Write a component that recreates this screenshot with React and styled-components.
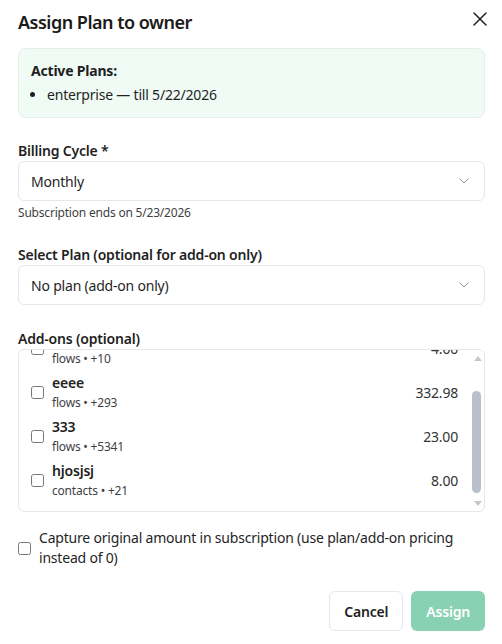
import React, { useLayoutEffect, useRef, useState } from 'react';
import styled, { createGlobalStyle } from 'styled-components';
import { X, ChevronDown } from 'lucide-react';

const GlobalStyle = createGlobalStyle`
  html, body {
    margin: 0;
    padding: 0;
    background: #ffffff;
  }
  body {
    font-family: 'Noto Sans', 'Open Sans', sans-serif;
    color: #1f1f1f;
    letter-spacing: -0.2px;
    -webkit-font-smoothing: antialiased;
  }
  * {
    box-sizing: border-box;
  }
`;

const Dialog = styled.div`
  width: 502px;
  padding: 8px 17px 13px 18px;
  display: flex;
  flex-direction: column;
`;

const Header = styled.div`
  display: flex;
  justify-content: space-between;
  align-items: center;
  height: 28px;
`;

const Title = styled.h2`
  margin: 0;
  font-size: 18px;
  font-weight: 600;
  line-height: 28px;
  letter-spacing: -0.5px;
  color: #1a1a1a;
`;

const CloseButton = styled.button`
  display: flex;
  align-items: center;
  justify-content: center;
  width: 24px;
  height: 24px;
  margin-right: -7px;
  margin-top: -6px;
  padding: 0;
  border: none;
  background: transparent;
  color: #222;
  cursor: pointer;
`;

const ActiveBox = styled.div`
  margin-top: 12px;
  padding: 12px;
  border: 1px solid #e3efe8;
  border-radius: 8px;
  background: #effbf4;
`;

const ActiveTitle = styled.div`
  font-size: 14px;
  font-weight: 700;
  line-height: 20px;
`;

const PlanList = styled.ul`
  margin: 4px 0 0 0;
  padding-left: 16px;
  font-size: 14px;
  line-height: 20px;
`;

const Section = styled.div`
  margin-top: ${(p) => p.$gap || 24}px;
  display: flex;
  flex-direction: column;
`;

const Label = styled.label`
  font-size: 14px;
  font-weight: 600;
  line-height: 20px;
`;

const SelectBox = styled.div`
  height: 40px;
  display: flex;
  align-items: center;
  justify-content: space-between;
  padding: 0 12px;
  border: 1px solid #e5e7eb;
  border-radius: 6px;
  font-size: 14px;
  color: #1f1f1f;
  background: #fff;

  svg {
    color: #6b7280;
    opacity: 0.75;
  }
`;

const Hint = styled.div`
  margin-top: 4px;
  font-size: 12px;
  line-height: 16px;
  color: #3f3f46;
`;

const ListFrame = styled.div`
  height: 163px;
  display: flex;
  border: 1px solid #e5e7eb;
  border-radius: 6px;
  overflow: hidden;
`;

const Viewport = styled.div`
  flex: 1;
  overflow: hidden;
`;

const ListContent = styled.div`
  padding: 8px 0 9px 0;
`;

const ScrollTrack = styled.div`
  width: 14px;
  display: flex;
  flex-direction: column;
  align-items: center;
`;

const ArrowButton = styled.div`
  height: 16px;
  width: 100%;
  display: flex;
  align-items: center;
  justify-content: center;
  padding-left: 1px;
`;

const ThumbArea = styled.div`
  flex: 1;
  width: 100%;
  display: flex;
  flex-direction: column;
  justify-content: flex-end;
  padding: 0 3px 2px 2px;
`;

const Thumb = styled.div`
  height: 102px;
  border-radius: 5px;
  background: #b9c0ca;
`;

const AddonRow = styled.label`
  display: flex;
  align-items: center;
  height: 44px;
  padding: 0 12px;
  gap: 8px;
  cursor: pointer;
`;

const Check = styled.input.attrs({ type: 'checkbox' })`
  width: 13px;
  height: 13px;
  margin: 0;
  flex-shrink: 0;
`;

const AddonInfo = styled.div`
  flex: 1;
  display: flex;
  flex-direction: column;
`;

const AddonName = styled.span`
  font-size: 14px;
  font-weight: 600;
  line-height: 20px;
`;

const AddonMeta = styled.span`
  margin-top: 2px;
  font-size: 12px;
  line-height: 16px;
  color: #3f3f46;
`;

const Price = styled.span`
  font-size: 14px;
  color: #333;
`;

const CaptureRow = styled.label`
  margin-top: 16px;
  display: flex;
  align-items: center;
  gap: 8px;
  font-size: 14px;
  line-height: 20px;
  cursor: pointer;
`;

const Footer = styled.div`
  margin-top: 23px;
  display: flex;
  justify-content: flex-end;
  gap: 8px;
`;

const Button = styled.button`
  height: 40px;
  padding: 0 14px;
  border-radius: 6px;
  font-family: inherit;
  font-size: 14px;
  font-weight: 600;
  letter-spacing: -0.2px;
  cursor: pointer;
  border: 1px solid ${(p) => (p.$primary ? 'transparent' : '#e5e7eb')};
  background: ${(p) => (p.$primary ? '#88d1b3' : '#ffffff')};
  color: ${(p) => (p.$primary ? '#ffffff' : '#1f1f1f')};
`;

const Arrow = ({ down }) => (
  <svg width="8" height="5" viewBox="0 0 8 5">
    <path d={down ? 'M0 0 L8 0 L4 5 Z' : 'M0 5 L4 0 L8 5 Z'} fill="#c4c8ce" />
  </svg>
);

const addons = [
  { name: 'test', meta: 'flows • +10', price: '4.00' },
  { name: 'eeee', meta: 'flows • +293', price: '332.98' },
  { name: '333', meta: 'flows • +5341', price: '23.00' },
  { name: 'hjosjsj', meta: 'contacts • +21', price: '8.00' },
];

export default function App() {
  const listRef = useRef(null);
  const [capture, setCapture] = useState(false);

  useLayoutEffect(() => {
    if (listRef.current) listRef.current.scrollTop = 9999;
  }, []);

  return (
    <>
      <GlobalStyle />
      <Dialog>
        <Header>
          <Title>Assign Plan to owner</Title>
          <CloseButton aria-label="Close">
            <X size={24} strokeWidth={1.5} />
          </CloseButton>
        </Header>

        <ActiveBox>
          <ActiveTitle>Active Plans:</ActiveTitle>
          <PlanList>
            <li>enterprise — till 5/22/2026</li>
          </PlanList>
        </ActiveBox>

        <Section $gap={23}>
          <Label>Billing Cycle *</Label>
          <SelectBox>
            Monthly
            <ChevronDown size={16} strokeWidth={1.5} />
          </SelectBox>
          <Hint>Subscription ends on 5/23/2026</Hint>
        </Section>

        <Section>
          <Label>Select Plan (optional for add-on only)</Label>
          <SelectBox>
            No plan (add-on only)
            <ChevronDown size={16} strokeWidth={1.5} />
          </SelectBox>
        </Section>

        <Section>
          <Label>Add-ons (optional)</Label>
          <ListFrame>
            <Viewport ref={listRef}>
              <ListContent>
                {addons.map((a) => (
                  <AddonRow key={a.name}>
                    <Check />
                    <AddonInfo>
                      <AddonName>{a.name}</AddonName>
                      <AddonMeta>{a.meta}</AddonMeta>
                    </AddonInfo>
                    <Price>{a.price}</Price>
                  </AddonRow>
                ))}
              </ListContent>
            </Viewport>
            <ScrollTrack>
              <ArrowButton>
                <Arrow />
              </ArrowButton>
              <ThumbArea>
                <Thumb />
              </ThumbArea>
              <ArrowButton>
                <Arrow down />
              </ArrowButton>
            </ScrollTrack>
          </ListFrame>
        </Section>

        <CaptureRow>
          <Check checked={capture} onChange={(e) => setCapture(e.target.checked)} />
          <span>
            Capture original amount in subscription (use plan/add-on pricing instead of 0)
          </span>
        </CaptureRow>

        <Footer>
          <Button>Cancel</Button>
          <Button $primary disabled>Assign</Button>
        </Footer>
      </Dialog>
    </>
  );
}
